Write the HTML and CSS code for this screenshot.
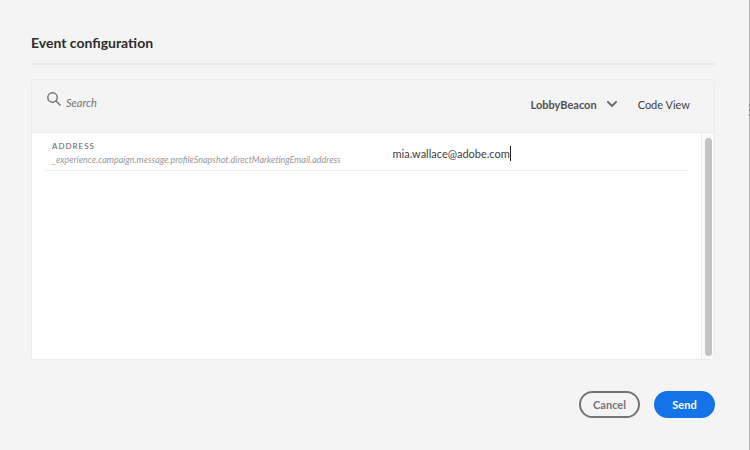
FILE: index.html
```html
<!DOCTYPE html>
<html lang="en">
<head>
<meta charset="utf-8">
<title>Event configuration</title>
<link rel="stylesheet" href="styles.css">
</head>
<body>
<main class="dialog">
  <h1 class="title">Event configuration</h1>
  <section class="panel">
    <div class="toolbar">
      <div class="search">
        <svg class="search-icon" viewBox="0 0 14 14" aria-hidden="true"><circle cx="5.5" cy="5.5" r="4.7"/><path d="M9 9 13 13"/></svg>
        <input class="search-input" type="search" placeholder="Search" aria-label="Search">
      </div>
      <div class="picker">
        <select class="select" aria-label="Event"><option>LobbyBeacon</option></select>
        <svg class="chevron" viewBox="0 0 10 6" aria-hidden="true"><path d="M1 1 5 5 9 1"/></svg>
      </div>
      <button class="code-view" type="button">Code View</button>
    </div>
    <div class="content">
      <div class="fields">
        <div class="row">
          <label class="field" for="address">
            <span class="name">ADDRESS</span>
            <span class="path">_experience.campaign.message.profileSnapshot.directMarketingEmail.address</span>
          </label>
          <div class="value">
            <input class="value-input" id="address" type="text" value="mia.wallace@adobe.com">
            <span class="caret"></span>
          </div>
        </div>
      </div>
      <div class="track"><div class="thumb"></div></div>
    </div>
  </section>
  <footer class="actions">
    <button class="button" type="button">Cancel</button>
    <button class="button primary" type="button">Send</button>
  </footer>
</main>
<div class="page-edge"><span class="grip"></span></div>
</body>
</html>
```
FILE: styles.css
```css
* { box-sizing: border-box; }
body {
  margin: 0;
  min-height: 100vh;
  display: flex;
  background: #f4f4f4;
  color: #404040;
  font-family: Lato, "Open Sans", sans-serif;
  font-size: 11px;
}
button, input, select {
  margin: 0;
  padding: 0;
  border: 0;
  background: none;
  color: inherit;
  font: inherit;
  outline: 0;
}
.dialog {
  flex: 1;
  min-width: 0;
  display: flex;
  flex-direction: column;
  padding: 32px 34px 32px 31px;
}
.title {
  margin: 0 0 14px;
  padding-bottom: 9px;
  border-bottom: 2px solid #e8e8e8;
  color: #2c2c2c;
  font-size: 14px;
  line-height: 22px;
  font-weight: 700;
}
.panel {
  flex: 1;
  display: flex;
  flex-direction: column;
  border: 1px solid #ebebeb;
  border-radius: 4px;
  overflow: hidden;
}
.toolbar {
  display: flex;
  align-items: center;
  height: 53px;
  padding: 0 24px 4px 15px;
  border-bottom: 1px solid #ebebeb;
}
.search { flex: 1; display: flex; gap: 5px; padding-bottom: 4px; }
.search-icon { width: 14px; height: 14px; }
.search-icon, .chevron { fill: none; stroke: #6e6e6e; }
.search-icon { stroke-width: 1.4; stroke-linecap: round; }
.search-input { height: 20px; font-style: italic; }
.search-input::placeholder { color: #747474; opacity: 1; }
.picker { display: flex; align-items: center; gap: 10px; margin-right: 21px; }
.select { appearance: none; field-sizing: content; font-weight: 700; color: #505050; }
.chevron { width: 10px; height: 6px; stroke-width: 2; stroke-linecap: round; stroke-linejoin: round; }
.content { flex: 1; display: flex; background: #fff; }
.fields { flex: 1; min-width: 0; padding: 0 14px 0 13px; }
.row {
  display: grid;
  grid-template-columns: 53% 1fr;
  align-items: center;
  height: 38px;
  padding: 3px 0 0 7px;
  border-bottom: 1px solid #ededed;
}
.field { display: flex; flex-direction: column; white-space: nowrap; }
.name { color: #606060; font-size: 8px; line-height: 13px; letter-spacing: 1px; }
.path { color: #999; font-size: 9px; line-height: 13px; font-style: italic; }
.value { display: flex; align-items: center; padding-left: 4px; }
.value-input { field-sizing: content; caret-color: transparent; }
.caret { width: 1px; height: 15px; background: #222; }
.track {
  display: flex;
  width: 13px;
  padding: 5px 2px 3px 3px;
  border-left: 1px solid #ebebeb;
  background: #fafafa;
}
.thumb { flex: 1; border-radius: 4px; background: #c2c2c2; }
.actions { display: flex; justify-content: flex-end; gap: 14px; margin-top: 31px; }
.button {
  width: 61px;
  height: 27px;
  border: 2px solid #747474;
  border-radius: 14px;
  color: #747474;
  font-weight: 700;
}
.primary { border-color: #1473e6; background: #1473e6; color: #fff; }
.page-edge {
  display: flex;
  flex-direction: column;
  width: 1px;
  padding-top: 104px;
  background: #b4b4b4;
}
.grip { height: 12px; background: repeating-linear-gradient(#777 0 2px, #b4b4b4 2px 5px); }
```
